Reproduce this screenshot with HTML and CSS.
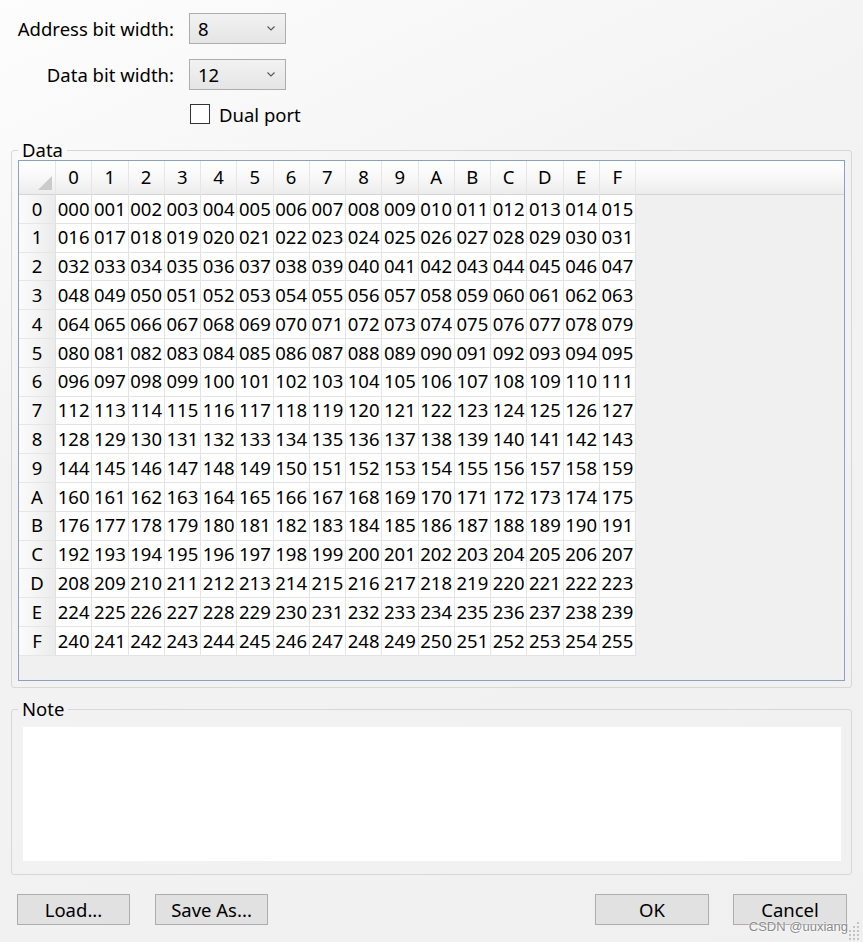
FILE: index.html
```html
<!DOCTYPE html>
<html>
<head>
<meta charset="utf-8">
<link rel="stylesheet" href="styles.css">
</head>
<body>
<div class="dialog">
  <div class="settings">
    <label class="lbl">Address bit width:</label>
    <div class="combo"><span>8</span><svg class="chev" width="8" height="5" viewBox="0 0 8 5"><path d="M0.5 0.5 L4 4 L7.5 0.5" fill="none" stroke="#555" stroke-width="1.1"/></svg></div>
    <label class="lbl">Data bit width:</label>
    <div class="combo"><span>12</span><svg class="chev" width="8" height="5" viewBox="0 0 8 5"><path d="M0.5 0.5 L4 4 L7.5 0.5" fill="none" stroke="#555" stroke-width="1.1"/></svg></div>
    <label class="check"><span class="box"></span>Dual port</label>
  </div>

  <fieldset class="group data">
    <legend>Data</legend>
    <div class="table">
      <div class="grid">
        <span class="corner"></span><span class="ch">0</span><span class="ch">1</span><span class="ch">2</span><span class="ch">3</span><span class="ch">4</span><span class="ch">5</span><span class="ch">6</span><span class="ch">7</span><span class="ch">8</span><span class="ch">9</span><span class="ch">A</span><span class="ch">B</span><span class="ch">C</span><span class="ch">D</span><span class="ch">E</span><span class="ch">F</span><span class="chf"></span>
        <span class="rh">0</span><span>000</span><span>001</span><span>002</span><span>003</span><span>004</span><span>005</span><span>006</span><span>007</span><span>008</span><span>009</span><span>010</span><span>011</span><span>012</span><span>013</span><span>014</span><span>015</span><span class="f"></span>
        <span class="rh">1</span><span>016</span><span>017</span><span>018</span><span>019</span><span>020</span><span>021</span><span>022</span><span>023</span><span>024</span><span>025</span><span>026</span><span>027</span><span>028</span><span>029</span><span>030</span><span>031</span><span class="f"></span>
        <span class="rh">2</span><span>032</span><span>033</span><span>034</span><span>035</span><span>036</span><span>037</span><span>038</span><span>039</span><span>040</span><span>041</span><span>042</span><span>043</span><span>044</span><span>045</span><span>046</span><span>047</span><span class="f"></span>
        <span class="rh">3</span><span>048</span><span>049</span><span>050</span><span>051</span><span>052</span><span>053</span><span>054</span><span>055</span><span>056</span><span>057</span><span>058</span><span>059</span><span>060</span><span>061</span><span>062</span><span>063</span><span class="f"></span>
        <span class="rh">4</span><span>064</span><span>065</span><span>066</span><span>067</span><span>068</span><span>069</span><span>070</span><span>071</span><span>072</span><span>073</span><span>074</span><span>075</span><span>076</span><span>077</span><span>078</span><span>079</span><span class="f"></span>
        <span class="rh">5</span><span>080</span><span>081</span><span>082</span><span>083</span><span>084</span><span>085</span><span>086</span><span>087</span><span>088</span><span>089</span><span>090</span><span>091</span><span>092</span><span>093</span><span>094</span><span>095</span><span class="f"></span>
        <span class="rh">6</span><span>096</span><span>097</span><span>098</span><span>099</span><span>100</span><span>101</span><span>102</span><span>103</span><span>104</span><span>105</span><span>106</span><span>107</span><span>108</span><span>109</span><span>110</span><span>111</span><span class="f"></span>
        <span class="rh">7</span><span>112</span><span>113</span><span>114</span><span>115</span><span>116</span><span>117</span><span>118</span><span>119</span><span>120</span><span>121</span><span>122</span><span>123</span><span>124</span><span>125</span><span>126</span><span>127</span><span class="f"></span>
        <span class="rh">8</span><span>128</span><span>129</span><span>130</span><span>131</span><span>132</span><span>133</span><span>134</span><span>135</span><span>136</span><span>137</span><span>138</span><span>139</span><span>140</span><span>141</span><span>142</span><span>143</span><span class="f"></span>
        <span class="rh">9</span><span>144</span><span>145</span><span>146</span><span>147</span><span>148</span><span>149</span><span>150</span><span>151</span><span>152</span><span>153</span><span>154</span><span>155</span><span>156</span><span>157</span><span>158</span><span>159</span><span class="f"></span>
        <span class="rh">A</span><span>160</span><span>161</span><span>162</span><span>163</span><span>164</span><span>165</span><span>166</span><span>167</span><span>168</span><span>169</span><span>170</span><span>171</span><span>172</span><span>173</span><span>174</span><span>175</span><span class="f"></span>
        <span class="rh">B</span><span>176</span><span>177</span><span>178</span><span>179</span><span>180</span><span>181</span><span>182</span><span>183</span><span>184</span><span>185</span><span>186</span><span>187</span><span>188</span><span>189</span><span>190</span><span>191</span><span class="f"></span>
        <span class="rh">C</span><span>192</span><span>193</span><span>194</span><span>195</span><span>196</span><span>197</span><span>198</span><span>199</span><span>200</span><span>201</span><span>202</span><span>203</span><span>204</span><span>205</span><span>206</span><span>207</span><span class="f"></span>
        <span class="rh">D</span><span>208</span><span>209</span><span>210</span><span>211</span><span>212</span><span>213</span><span>214</span><span>215</span><span>216</span><span>217</span><span>218</span><span>219</span><span>220</span><span>221</span><span>222</span><span>223</span><span class="f"></span>
        <span class="rh">E</span><span>224</span><span>225</span><span>226</span><span>227</span><span>228</span><span>229</span><span>230</span><span>231</span><span>232</span><span>233</span><span>234</span><span>235</span><span>236</span><span>237</span><span>238</span><span>239</span><span class="f"></span>
        <span class="rh">F</span><span>240</span><span>241</span><span>242</span><span>243</span><span>244</span><span>245</span><span>246</span><span>247</span><span>248</span><span>249</span><span>250</span><span>251</span><span>252</span><span>253</span><span>254</span><span>255</span><span class="f"></span>
      </div>
    </div>
  </fieldset>

  <fieldset class="group note">
    <legend>Note</legend>
    <div class="notearea"></div>
  </fieldset>

  <div class="buttons">
    <button class="btn">Load...</button>
    <button class="btn">Save As...</button>
    <button class="btn ok">OK</button>
    <button class="btn">Cancel</button>
  </div>

  <div class="watermark">CSDN @uuxiang</div>
  <svg class="grip" width="12" height="20" viewBox="0 0 12 20">
    <g fill="#c4c4c4">
      <rect x="9" y="2" width="2" height="2"/>
      <rect x="9" y="6" width="2" height="2"/><rect x="5" y="6" width="2" height="2"/>
      <rect x="9" y="10" width="2" height="2"/><rect x="5" y="10" width="2" height="2"/><rect x="1" y="10" width="2" height="2"/>
      <rect x="9" y="14" width="2" height="2"/><rect x="5" y="14" width="2" height="2"/><rect x="1" y="14" width="2" height="2"/>
      <rect x="9" y="18" width="2" height="2"/><rect x="5" y="18" width="2" height="2"/><rect x="1" y="18" width="2" height="2"/>
    </g>
  </svg>
</div>
</body>
</html>
```

FILE: styles.css
```css
html, body {
  margin: 0;
  padding: 0;
}
body {
  width: 863px;
  height: 942px;
  overflow: hidden;
  font-family: "Noto Sans", "DejaVu Sans", sans-serif;
  font-size: 18.5px;
  color: #000;
  background: linear-gradient(155deg, #fdfdfd 0%, #f3f3f3 35%, #f0f0f0 100%);
}
.dialog {
  position: relative;
  display: flex;
  flex-direction: column;
  height: 942px;
}

/* top settings */
.settings {
  display: grid;
  grid-template-columns: 174px 97px;
  grid-template-rows: 31px 31px 20px;
  column-gap: 15px;
  row-gap: 15px;
  padding-top: 13px;
  align-items: center;
}
.lbl {
  text-align: right;
  line-height: 31px;
  white-space: nowrap;
}
.combo {
  height: 31px;
  box-sizing: border-box;
  border: 1px solid #adadad;
  background: linear-gradient(#f2f2f2, #e5e5e5);
  display: flex;
  align-items: center;
  justify-content: space-between;
  padding: 0 10px 0 8px;
}
.chev {
  display: block;
}
.check {
  grid-column: 2;
  display: flex;
  align-items: center;
  gap: 9px;
  white-space: nowrap;
  padding-left: 1px;
  margin-top: -2px;
}
.box {
  flex: none;
  width: 20px;
  height: 20px;
  box-sizing: border-box;
  border: 1px solid #333;
  background: #fff;
}

/* group boxes */
fieldset.group {
  margin: 0 11px;
  border: 1px solid #d7d7d7;
  border-radius: 3px;
  padding: 0 6px 6px 6px;
  min-width: 0;
}
legend {
  font-size: 18.5px;
  line-height: 20px;
  padding: 0 4px;
}
fieldset.data {
  margin-top: 15px;
}
fieldset.note {
  margin-top: 11px;
  padding: 8px 10px 13px 11px;
}
.note legend {
  margin-left: -5px;
}
.notearea {
  height: 134px;
  background: #fff;
}

/* table */
.table {
  height: 521px;
  box-sizing: border-box;
  border: 1px solid #8aa2c0;
  background: #f0f0f0;
  overflow: hidden;
}
.grid {
  display: grid;
  grid-template-columns: 37px repeat(16, 36.25px) 1fr;
  grid-template-rows: 34px repeat(16, 28.8px);
}
.grid > span {
  display: flex;
  align-items: center;
  justify-content: center;
  box-sizing: border-box;
  border-right: 1px solid #e3e3e3;
  border-bottom: 1px solid #e3e3e3;
  background: #fff;
  line-height: 1;
}
.grid > .ch,
.grid > .chf,
.grid > .corner {
  background: linear-gradient(#ffffff 0%, #f9f9f9 45%, #ececec 100%);
  border-bottom: 1px solid #d5d5d5;
  border-right: 1px solid #e6e6e6;
}
.grid > .chf {
  border-right: none;
}
.grid > .corner {
  position: relative;
}
.corner::after {
  content: "";
  position: absolute;
  right: 3px;
  bottom: 4px;
  width: 0;
  height: 0;
  border-left: 14px solid transparent;
  border-bottom: 14px solid #cbcbcb;
}
.grid > .rh {
  background: linear-gradient(90deg, #fbfbfb 0%, #f4f4f4 50%, #ebebeb 100%);
  border-right: 1px solid #e0e0e0;
  border-bottom: 1px solid #e6e6e6;
}
.grid > .f {
  background: transparent;
  border: none;
}

/* buttons */
.buttons {
  display: flex;
  margin-top: 19px;
  padding: 0 16px 0 17px;
  gap: 25px;
}
.btn {
  width: 113px;
  height: 31px;
  box-sizing: border-box;
  border: 1px solid #adadad;
  background: #e1e1e1;
  font-family: "Noto Sans", "DejaVu Sans", sans-serif;
  font-size: 18.5px;
  color: #000;
  padding: 0;
  line-height: 29px;
}
.btn.ok {
  margin-left: auto;
  width: 114px;
}
.btn.ok + .btn {
  width: 114px;
  margin-left: -1px;
}

.watermark {
  position: absolute;
  right: 15px;
  bottom: 8px;
  font-family: "Liberation Sans", sans-serif;
  font-size: 13px;
  color: #8a8a8a;
  text-shadow: 0 0 2px #fff, 0 0 2px #fff;
}
.grip {
  position: absolute;
  right: 3px;
  bottom: 2px;
}
```
